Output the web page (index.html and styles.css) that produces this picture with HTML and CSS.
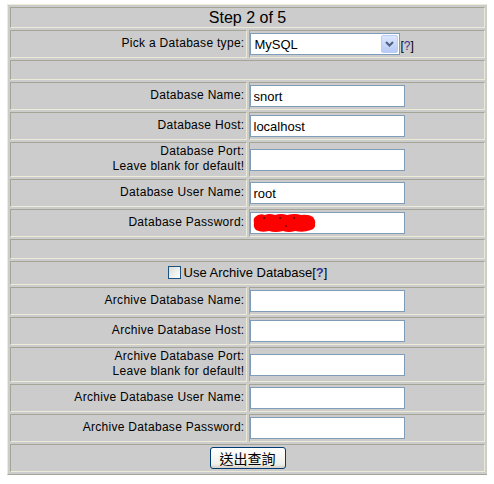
FILE: index.html
```html
<!DOCTYPE html>
<html>
<head>
<meta charset="utf-8">
<link rel="stylesheet" href="styles.css">
</head>
<body>
<table class="setup">
  <tr><td colspan="2" class="title">Step 2 of 5</td></tr>
  <tr>
    <td class="label">Pick a Database type:</td>
    <td class="field">
      <span class="select"><span class="select-value">MySQL</span><span class="select-btn"><svg width="9" height="6" viewBox="0 0 9 6"><path d="M1 1 L4.5 4.5 L8 1" fill="none" stroke="#4d6185" stroke-width="2"/></svg></span></span><span class="help">[<a class="q">?</a>]</span>
    </td>
  </tr>
  <tr><td colspan="2" class="empty">&nbsp;</td></tr>
  <tr><td class="label">Database Name:</td><td class="field"><input class="text" type="text" value="snort"></td></tr>
  <tr><td class="label">Database Host:</td><td class="field"><input class="text" type="text" value="localhost"></td></tr>
  <tr><td class="label">Database Port:<br>Leave blank for default!</td><td class="field"><input class="text" type="text" value=""></td></tr>
  <tr><td class="label">Database User Name:</td><td class="field"><input class="text" type="text" value="root"></td></tr>
  <tr><td class="label">Database Password:</td><td class="field"><span class="pwwrap"><input class="text" type="text" value=""><svg class="scribble" width="64" height="22" viewBox="0 0 64 22"><path d="M2 5 Q6 1 12 3 Q16 1 22 3 Q28 1 34 3 Q42 1 48 3 Q56 2 60 5 Q63 9 62 12 Q63 16 58 18 Q50 21 42 19 Q36 21 30 19 Q22 21 16 19 Q8 21 3 18 Q0 15 1 11 Q0 7 2 5 Z" fill="#ff0000"/><circle cx="11" cy="6" r="0.8" fill="#000"/><circle cx="27" cy="6" r="0.8" fill="#000"/><circle cx="41" cy="6" r="0.8" fill="#000"/><circle cx="33" cy="14" r="0.7" fill="#000"/></svg></span></td></tr>
  <tr><td colspan="2" class="empty">&nbsp;</td></tr>
  <tr><td colspan="2" class="center"><span class="check"></span>Use Archive Database[<a class="q bold">?</a>]</td></tr>
  <tr><td class="label">Archive Database Name:</td><td class="field"><input class="text" type="text" value=""></td></tr>
  <tr><td class="label">Archive Database Host:</td><td class="field"><input class="text" type="text" value=""></td></tr>
  <tr><td class="label">Archive Database Port:<br>Leave blank for default!</td><td class="field"><input class="text" type="text" value=""></td></tr>
  <tr><td class="label">Archive Database User Name:</td><td class="field"><input class="text" type="text" value=""></td></tr>
  <tr><td class="label">Archive Database Password:</td><td class="field"><input class="text" type="text" value=""></td></tr>
  <tr><td colspan="2" class="center btnrow"><button class="submit" type="button">送出查詢</button></td></tr>
</table>
</body>
</html>
```
FILE: styles.css
```css
body {
  margin: 4px 7px;
  background: #ffffff;
  font-family: "Liberation Sans", Arial, sans-serif;
  font-size: 12px;
  color: #000;
}
.setup {
  width: 481px;
  border-collapse: separate;
  border-spacing: 2px;
  background: #cccccc;
  border: 1px solid;
  border-color: #ecebd8 #a5a597 #a5a597 #ecebd8;
}
.setup td {
  background: #cccccc;
  border: 1px solid;
  border-color: #a5a597 #ecebd8 #ecebd8 #a5a597;
  padding: 2px 1px;
  vertical-align: middle;
}
.setup td.title {
  text-align: center;
  font-size: 16px;
  line-height: 19px;
  padding: 0;
  height: 19px;
}
.setup td.label {
  width: 50%;
  text-align: right;
  line-height: 15px;
  letter-spacing: 0.3px;
  padding: 1px 1px 2px 1px;
}
.setup td.field {
  width: 50%;
  padding-left: 0;
}
.setup td.empty {
  height: 14px;
  line-height: 14px;
}
.setup td.center {
  text-align: center;
  font-size: 13px;
  line-height: 18px;
}
.text {
  box-sizing: border-box;
  width: 155px;
  height: 22px;
  border: 1px solid #7f9db9;
  background: #fff;
  padding: 2px 3px;
  margin: 0;
  font-family: "Liberation Sans", Arial, sans-serif;
  font-size: 13px;
  color: #000;
  vertical-align: middle;
}
.select {
  display: inline-flex;
  box-sizing: border-box;
  width: 150px;
  height: 22px;
  border: 1px solid #7f9db9;
  background: #fff;
  vertical-align: middle;
  align-items: center;
  justify-content: space-between;
}
.select-value {
  padding-left: 4px;
  font-size: 13px;
}
.select-btn {
  box-sizing: border-box;
  width: 17px;
  height: 18px;
  margin-right: 1px;
  border: 1px solid #b9cdf5;
  border-radius: 2px;
  background: linear-gradient(#dce6fd, #b7cbf6);
  display: flex;
  align-items: center;
  justify-content: center;
}
.help {
  vertical-align: -3px;
  font-size: 12px;
  margin-left: 1px;
}
.q {
  color: #333399;
}
.q.bold {
  font-weight: bold;
}
.pwwrap {
  position: relative;
  display: inline-block;
  vertical-align: middle;
}
.pwwrap .text {
  vertical-align: top;
}
.scribble {
  position: absolute;
  left: 3px;
  top: 0;
}
.check {
  display: inline-block;
  box-sizing: border-box;
  width: 13px;
  height: 13px;
  border: 1px solid #1c5180;
  background: linear-gradient(135deg, #dcdcd6, #ffffff);
  vertical-align: -2px;
  margin-right: 3px;
}
.setup td.btnrow {
  padding: 2px 1px;
  line-height: 20px;
}
.submit {
  box-sizing: border-box;
  width: 76px;
  height: 22px;
  border: 1px solid #003c74;
  border-radius: 3px;
  background: linear-gradient(#ffffff, #f0f0ea 80%, #d6d0c5);
  font-family: "Noto Sans CJK TC", "Noto Sans CJK SC", sans-serif;
  font-size: 14px;
  line-height: 18px;
  padding: 0;
  color: #000;
  vertical-align: middle;
}
```
